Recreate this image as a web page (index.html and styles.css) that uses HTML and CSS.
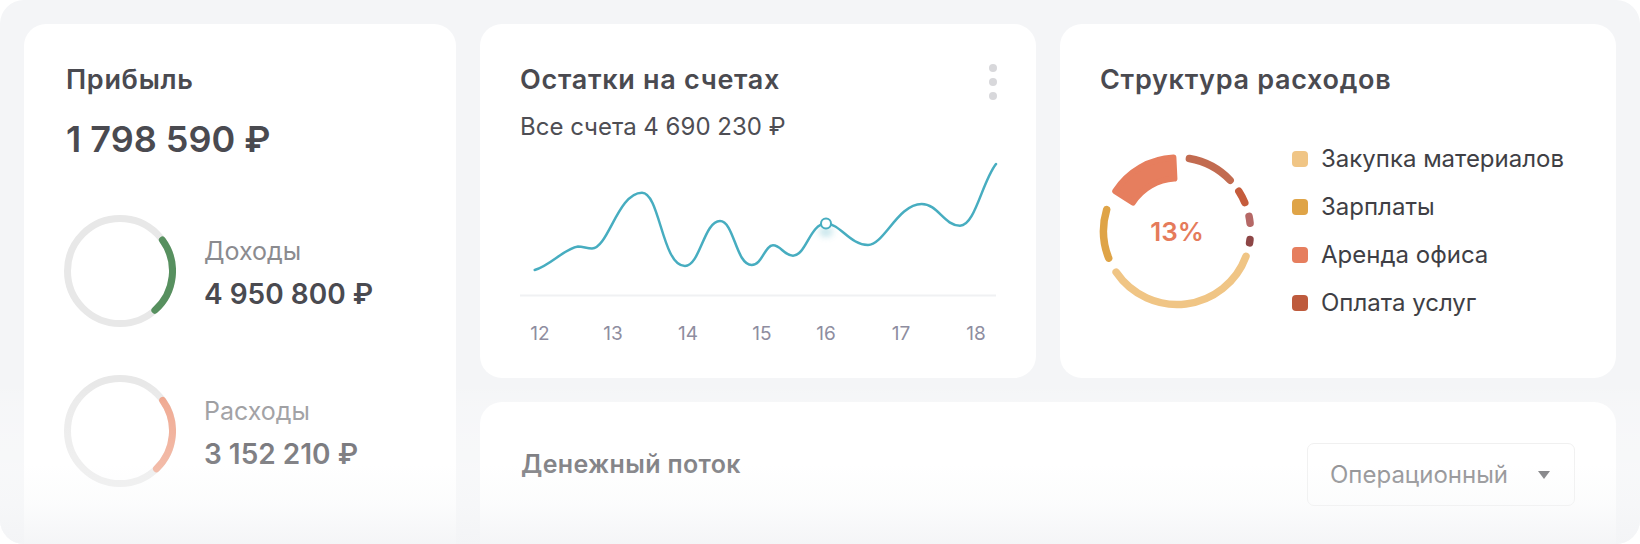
FILE: index.html
```html
<!DOCTYPE html>
<html lang="ru">
<head>
  <meta charset="UTF-8">
  <meta name="viewport" content="width=device-width, initial-scale=1.0">
  <title>Финансы</title>
  <link rel="stylesheet" href="styles.css">
</head>
<body>
  <div class="board">

    <section class="card profit">
      <h2 class="card-title">Прибыль</h2>
      <div class="profit-total">1 798 590 ₽</div>

      <div class="flow">
        <svg class="ring" width="112" height="112" viewBox="0 0 112 112">
          <circle cx="56" cy="56" r="52.5" fill="none" stroke="#e8e8e8" stroke-width="7"/>
          <circle cx="56" cy="56" r="52.5" fill="none" stroke="#57905f" stroke-width="7"
                  stroke-linecap="round" stroke-dasharray="77.3 330" transform="rotate(-36.2 56 56)"/>
        </svg>
        <div class="flow-text">
          <div class="flow-label">Доходы</div>
          <div class="flow-sum">4 950 800 ₽</div>
        </div>
      </div>

      <div class="flow">
        <svg class="ring" width="112" height="112" viewBox="0 0 112 112">
          <defs>
            <linearGradient id="costs-arc" x1="0" y1="0" x2="0" y2="112" gradientUnits="userSpaceOnUse">
              <stop offset="0.15" stop-color="#e8896a"/>
              <stop offset="0.35" stop-color="#ed9a7e"/>
            </linearGradient>
          </defs>
          <circle cx="56" cy="56" r="52.5" fill="none" stroke="#e8e8e8" stroke-width="7"/>
          <circle cx="56" cy="56" r="52.5" fill="none" stroke="url(#costs-arc)" stroke-width="7"
                  stroke-linecap="round" stroke-dasharray="74.6 330" transform="rotate(-35.6 56 56)"/>
        </svg>
        <div class="flow-text">
          <div class="flow-label">Расходы</div>
          <div class="flow-sum">3 152 210 ₽</div>
        </div>
      </div>
    </section>

    <section class="card balance">
      <div class="card-head">
        <h2 class="card-title">Остатки на счетах</h2>
        <div class="dots"><span></span><span></span><span></span></div>
      </div>
      <div class="balance-sub">Все счета 4 690 230 ₽</div>
      <svg class="chart" width="476" height="210" viewBox="0 0 476 210">
        <defs>
          <filter id="glow" x="-1" y="-1" width="3" height="3">
            <feGaussianBlur stdDeviation="3"/>
          </filter>
        </defs>
        <line x1="0" y1="153.5" x2="476" y2="153.5" stroke="#f0f1f3" stroke-width="2"/>
        <path d="M14.7,128 C30,124 45,106 58,104.5 C63,104.5 67,106.5 72,106.5 C88,106.5 98,50.7 122,50.7 C140,50.7 142,124 165,124 C180,124 184,79 200,79 C214,79 216,123 231.7,123 C242,123 245,103.3 253,103.3 C261,103.3 264,113.7 273,113.7 C286,113.7 290,81.5 306,81.5 C320,81.5 330,103 348,103 C364,103 378,62 401.7,62 C418,62 424,83.7 440,83.7 C455,83.7 462,40 476,22"
              fill="none" stroke="#47adc0" stroke-width="2.5" stroke-linecap="round"/>
        <ellipse cx="306" cy="90" rx="7" ry="5" fill="#47adc0" opacity="0.3" filter="url(#glow)"/>
        <circle cx="306" cy="81.5" r="5" fill="#fff" stroke="#47adc0" stroke-width="2"/>
        <g class="axis">
          <text x="20" y="198">12</text>
          <text x="93" y="198">13</text>
          <text x="168" y="198">14</text>
          <text x="242" y="198">15</text>
          <text x="306" y="198">16</text>
          <text x="381" y="198">17</text>
          <text x="456" y="198">18</text>
        </g>
      </svg>
    </section>

    <section class="card costs">
      <h2 class="card-title">Структура расходов</h2>
      <div class="costs-body">
        <svg class="donut" width="154" height="154" viewBox="0 0 154 154">
          <g fill="none" stroke-width="7.5" stroke-linecap="round">
            <path d="M89.38,4.55 A73.5,73.5 0 0 1 130.14,26.22" stroke="#c26b50"/>
            <path d="M138.85,37.3 A73.5,73.5 0 0 1 144.8,48.64" stroke="#c55c3c"/>
            <path d="M149.02,62.34 A73.5,73.5 0 0 1 150.08,69.19" stroke="#b56866"/>
            <path d="M150,85.58 A73.5,73.5 0 0 1 149.54,88.88" stroke="#8d4646"/>
            <path d="M145.98,102.38 A73.5,73.5 0 0 1 16.13,118.2" stroke="#f0c585"/>
            <path d="M8.71,104.17 A73.5,73.5 0 0 1 6.67,55.63" stroke="#dfa447"/>
          </g>
          <path d="M15.22,37.19 A73.5,73.5 0 0 1 73.41,3.59 L74.44,24.56 A52.5,52.5 0 0 0 32.87,48.56 Z"
                fill="#e67e5e" stroke="#e67e5e" stroke-width="6" stroke-linejoin="round"/>
          <text class="donut-value" x="77" y="87">13%</text>
        </svg>
        <ul class="legend">
          <li><span class="swatch" style="background:#f0c585"></span>Закупка материалов</li>
          <li><span class="swatch" style="background:#dfa447"></span>Зарплаты</li>
          <li><span class="swatch" style="background:#e67e5e"></span>Аренда офиса</li>
          <li><span class="swatch" style="background:#be5b3d"></span>Оплата услуг</li>
        </ul>
      </div>
    </section>

    <section class="card cashflow">
      <div class="card-head">
        <h2 class="card-title cashflow-title">Денежный поток</h2>
        <div class="select">Операционный <span class="caret"></span></div>
      </div>
    </section>

  </div>
</body>
</html>
```

FILE: styles.css
```css
html, body {
  margin: 0;
  background: #fff;
  font-family: "Inter", "Noto Sans", sans-serif;
  color: #4a4a50;
}
.board {
  position: relative;
  box-sizing: border-box;
  width: 1640px;
  height: 544px;
  padding: 24px 24px 0;
  display: grid;
  grid-template-columns: 432px 556px 556px;
  grid-template-rows: 354px 300px;
  gap: 24px;
  background: #f4f5f7;
  border-radius: 24px;
  overflow: hidden;
}
/* fade at the bottom edge */
.board::after {
  content: "";
  position: absolute;
  left: 0;
  right: 0;
  bottom: 0;
  height: 160px;
  pointer-events: none;
  background: linear-gradient(to bottom,
    rgba(255,255,255,0) 0%,
    rgba(255,255,255,0.18) 12%,
    rgba(255,255,255,0.32) 50%,
    rgba(248,249,250,0.5) 75%,
    rgba(243,244,246,0.88) 100%);
}
.card {
  background: #fff;
  border-radius: 22px;
  box-sizing: border-box;
  padding: 40px 40px 0;
}
.card-title {
  margin: 0;
  font-size: 27px;
  line-height: 32px;
  font-weight: 600;
  letter-spacing: 0.7px;
  color: #4a4a50;
}
.card-head {
  display: flex;
  justify-content: space-between;
  align-items: flex-start;
}

/* Прибыль */
.profit {
  grid-row: 1 / span 2;
  padding-left: 42px;
}
.profit-total {
  margin-top: 21px;
  font-size: 36px;
  line-height: 44px;
  font-weight: 600;
}
.flow {
  display: flex;
  align-items: center;
  gap: 28px;
  margin-top: 48px;
}
.profit-total + .flow {
  margin-top: 54px;
}
.ring {
  display: block;
  flex: none;
  margin-left: -2px;
}
.flow-text {
  padding-top: 4px;
}
.flow-label {
  font-size: 25px;
  line-height: 32px;
  color: #8b8b8f;
}
.flow-sum {
  margin-top: 9px;
  font-size: 28px;
  line-height: 36px;
  font-weight: 600;
}

/* Остатки на счетах */
.dots {
  display: flex;
  flex-direction: column;
  gap: 6px;
  margin-right: -1px;
}
.dots span {
  width: 8px;
  height: 8px;
  border-radius: 50%;
  background: #d8d8db;
}
.balance-sub {
  margin-top: 12px;
  font-size: 24px;
  line-height: 30px;
  color: #4e4e54;
}
.chart {
  display: block;
  overflow: visible;
}
.axis text {
  font-size: 19px;
  fill: #8e8da0;
  text-anchor: middle;
}

/* Структура расходов */
.costs-body {
  display: flex;
  align-items: center;
  gap: 38px;
  margin-top: 47px;
}
.donut {
  display: block;
  flex: none;
  overflow: visible;
}
.donut-value {
  font-size: 26px;
  font-weight: 600;
  fill: #e57b5b;
  text-anchor: middle;
}
.legend {
  list-style: none;
  margin: 0;
  padding: 0;
  display: flex;
  flex-direction: column;
  gap: 16px;
}
.legend li {
  display: flex;
  align-items: center;
  gap: 13px;
  font-size: 24px;
  line-height: 32px;
  color: #3f3f45;
}
.swatch {
  width: 16px;
  height: 16px;
  border-radius: 4px;
}

/* Денежный поток */
.cashflow {
  grid-column: 2 / span 2;
  padding: 41px 41px 0;
}
.cashflow-title {
  margin-top: 5px;
  font-size: 25px;
  letter-spacing: 0.35px;
}
.select {
  box-sizing: border-box;
  width: 268px;
  height: 63px;
  padding: 0 24px 0 22px;
  display: flex;
  align-items: center;
  justify-content: space-between;
  border: 1.5px solid #ebebeb;
  border-radius: 7px;
  font-size: 24px;
  color: #616165;
}
.caret {
  width: 0;
  height: 0;
  border-left: 6.5px solid transparent;
  border-right: 6.5px solid transparent;
  border-top: 8px solid #48484c;
}
```
